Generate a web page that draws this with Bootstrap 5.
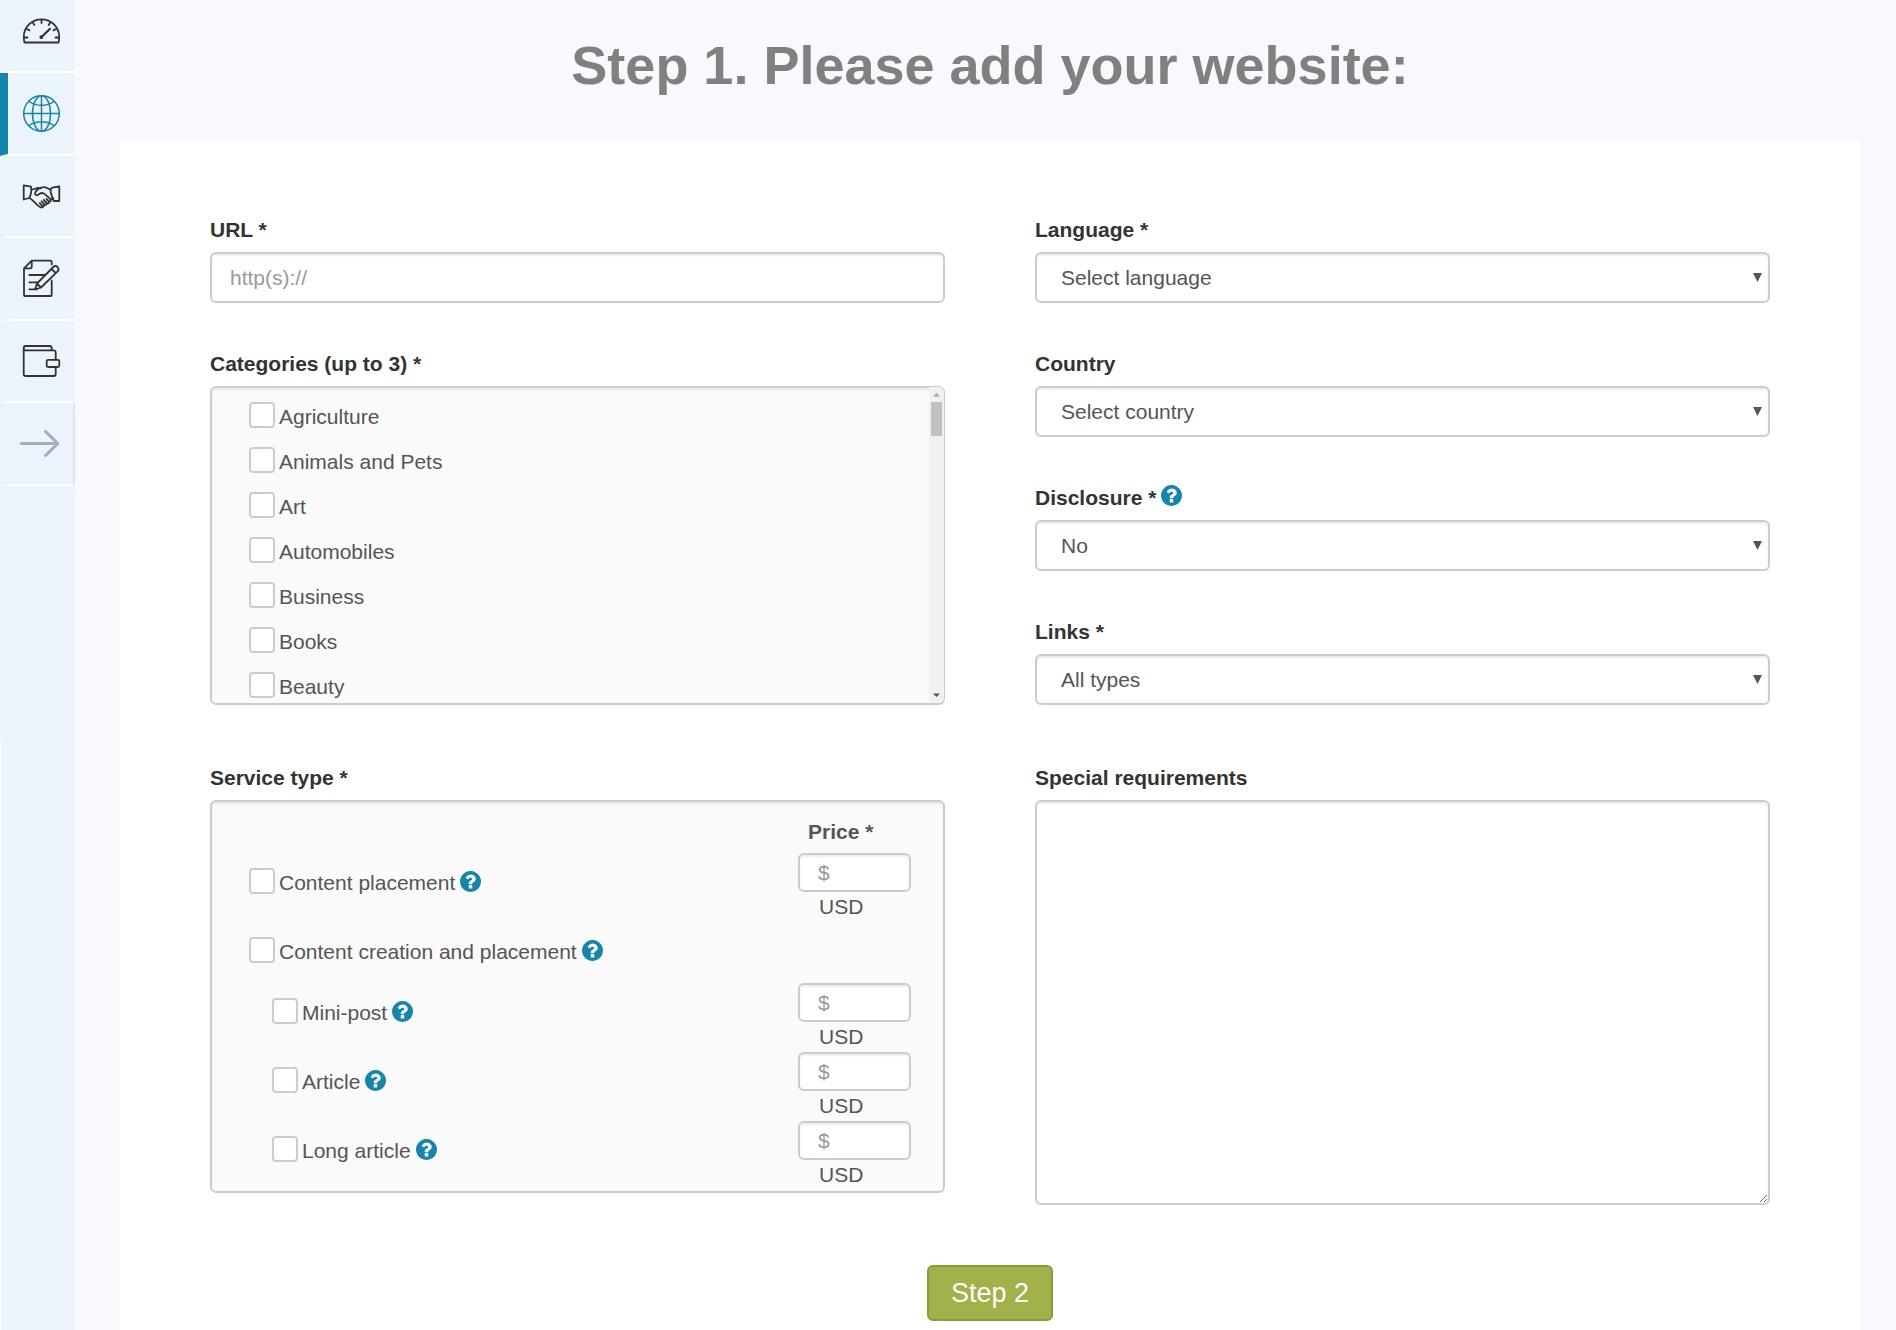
<!DOCTYPE html>
<html lang="en">
<head>
<meta charset="utf-8">
<meta name="viewport" content="width=device-width, initial-scale=1">
<title>Add your website</title>
<link href="https://cdn.jsdelivr.net/npm/bootstrap@5.3.0/dist/css/bootstrap.min.css" rel="stylesheet">
<style>
  body { font-family: "Liberation Sans", Arial, sans-serif; font-size: 21px; line-height: 30px; color: #555; background: #f8f9fe; }

  /* Side navigation */
  .rail { flex: 0 0 75px; background: linear-gradient(#fff, #fff) 0 740px / 1px 100% no-repeat #ebf3fb; }
  .rail-list { height: 486px; }
  .rail-link { flex: 1 1 0; padding-bottom: 22px; color: #333; border-left: 8px solid #ebf3fb; border-bottom: 2px solid #fff; }
  .rail-link:first-child { flex: 0 0 73px; }
  .rail-link.active { color: #1485ad; border-left-color: #1485ad; }
  .rail-link.expand { color: #a3adbd; border-right: 2px solid #dfe4fd; }
  .rail-link svg { width: 37px; height: 37px; overflow: visible; fill: none; stroke: currentColor; stroke-width: 1.8; stroke-linecap: round; stroke-linejoin: round; }
  .rail-link.active svg { stroke-width: 1.5; }
  .rail-link.expand svg { stroke-width: 3; margin-left: 2px; }

  /* Page */
  .content { padding: 0 36px 0 45px; }
  .page-title { padding: 35px 0 45px; font-size: 54px; line-height: 60px; font-weight: 700; color: #808080; }
  .panel { padding: 75px 90px 9px; background: #fff; }
  .panel .row { --bs-gutter-x: 90px; }
  .stack { gap: 46px; }
  .second-row { margin-top: 58px; }

  /* Fields */
  .field-label { display: flex; gap: 5px; margin-bottom: 7px; font-weight: 700; color: #333; }
  .field, .box { border: 2px solid #ccc; border-radius: 6px; box-shadow: inset 0 2px 2px rgba(0,0,0,.075); }
  .field { display: block; width: 100%; height: 51px; padding: 0 18px; font-size: 21px; line-height: 30px; color: #555; background-color: #fff; }
  .field::placeholder { color: #999; opacity: 1; }
  select.field { appearance: none; padding-left: 24px; background: url("data:image/svg+xml,%3Csvg xmlns='http://www.w3.org/2000/svg' viewBox='0 0 9 9'%3E%3Cpath fill='%23555' d='M0 0h9L4.500 9z'/%3E%3C/svg%3E") right 6px top 19px / 9px 9px no-repeat #fff; }
  textarea.field { height: 405px; padding: 9px 18px; resize: both; }
  .field.price { width: 113px; height: 39px; }
  .box { background: #fafafa; }
  .tick { display: flex; gap: 4px; }
  .tick input { appearance: none; flex: none; width: 26px; height: 26px; margin: 0; border: 2px solid #ccc; border-radius: 4px; background: #fff; }
  .tick input:checked { background: #1485ad; }
  .help { display: block; flex: none; width: 21px; height: 21px; margin-top: 2px; padding: 0; border: 0; background: none; color: #1485ad; }
  .service .help { margin-top: 3px; }
  .help svg { display: block; width: 21px; height: 21px; fill: currentColor; }

  /* Categories */
  .categories { height: 319px; }
  .category-list { padding: 14px 37px 0; gap: 15px; overflow-y: auto; scrollbar-width: none; }
  .category-list::-webkit-scrollbar { display: none; }
  .scroll-track { flex: 0 0 15px; margin: -1px -1px 0 0; padding: 5px 2px; background: #f1f1f1; border-radius: 0 5px 5px 0; }
  .scroll-thumb { width: 11px; height: 34px; margin: 5px 0 auto; background: #c1c1c1; }
  .scroll-track svg { display: block; width: 7px; height: 5px; }

  /* Services */
  .services { padding: 15px 32px 1px 37px; }
  .price-head { width: 103px; margin-bottom: 6px; }
  .service { padding-top: 15px; gap: 5px; }
  .service.alone { padding-bottom: 16px; }
  .service.child { padding-left: 23px; }
  .unit { padding-left: 21px; }

  .btn-next { --bs-btn-color: #fff; --bs-btn-bg: #a3b14a; --bs-btn-border-color: #8b9b35; --bs-btn-hover-color: #fff; --bs-btn-hover-bg: #93a23e; --bs-btn-hover-border-color: #7b8a2c; --bs-btn-padding-x: 22px; --bs-btn-padding-y: 8px; --bs-btn-font-size: 27px; --bs-btn-line-height: 36px; --bs-btn-border-width: 2px; --bs-btn-border-radius: 6px; margin-top: 60px; }
</style>
</head>
<body>
<svg class="d-none" aria-hidden="true">
  <symbol id="q" viewBox="128 128 1536 1536"><path d="M1024 1376v-192q0-14-9-23t-23-9h-192q-14 0-23 9t-9 23v192q0 14 9 23t23 9h192q14 0 23-9t9-23zm256-672q0-88-55.500-163t-138.500-116-170-41q-243 0-371 213-15 24 8 42l132 100q7 6 19 6 16 0 25-12 53-68 86-92 34-24 86-24 48 0 85.500 26t37.500 59q0 38-20 61t-68 45q-63 28-115.500 86.500t-52.500 125.500v36q0 14 9 23t23 9h192q14 0 23-9t9-23q0-19 21.500-49.500t54.500-49.500q32-18 49-28.500t46-35 44.500-48 28-60.500 12.500-81zm384 192q0 209-103 385.500t-279.500 279.500-385.500 103-385.500-103-279.500-279.500-103-385.500 103-385.500 279.500-279.500 385.500-103 385.500 103 279.500 279.500 103 385.500z"/></symbol>
</svg>
<div class="d-flex min-vh-100">
  <aside class="rail">
    <nav class="rail-list d-flex flex-column" aria-label="Main">
      <a class="rail-link d-flex align-items-end justify-content-center" href="#" aria-label="Dashboard">
        <svg viewBox="0 0 37 37"><path d="M1.500 30.500h34q.7-2.700.7-5.500a17.700 17.700 0 0 0-35.400 0q0 2.800.7 5.500zM1 25.500h3.500M36 25.500h-3.500M3.500 16.800l3 1.600M33.500 16.800l-3 1.600M9.500 10l1.800 3M27.500 10l-1.800 3M18.500 7.500v3.500"/><path d="M18.300 25.200l8.500-8.200" stroke-width="2.200"/><circle cx="18.300" cy="25.200" r="1" fill="currentColor"/></svg>
      </a>
      <a class="rail-link active d-flex align-items-end justify-content-center" href="#" aria-label="Websites" aria-current="page">
        <svg viewBox="0 0 37 37"><circle cx="18.500" cy="18.500" r="17.800"/><ellipse cx="18.500" cy="18.500" rx="9" ry="17.800"/><path d="M18.500.7v35.600M.7 18.500h35.600M6 6.500q5.500 3.800 12.500 3.800t12.500-3.800M6 30.500q5.500-3.800 12.500-3.800t12.500 3.800"/></svg>
      </a>
      <a class="rail-link d-flex align-items-end justify-content-center" href="#" aria-label="Deals">
        <svg viewBox="0 0 37 37"><path d="M.7 8.300L8 9.700q1 6-1.700 11.300l-5.600 1.500zM36.300 9.500l-6 .8q-3.600.7-2.500 5.200.8 4.500 3 8.500h5.500zM8.500 12.300c3 .6 4-1.600 7.200-1.300l2.300.3M6.500 21c3 1.500 5.300 5.200 9.500 8.400 1.700 1.300 3.600 1.200 4.600.1M28 12.200c-3 .6-4-2.400-7.800-2-3.700.2-7.500 3.300-8.200 6.300-.3 1.500 1.700 2 3.200 1.200 1.600-.9 2.800-2.200 4.800-1.600 2.500.8 5 4.300 7.500 6.200 1.200 1.300 0 2.700-1.500 2.200L23.500 22M26 24.500c.5 1.800-.9 2.500-2.300 1.500l-3-3M23.700 26c.3 1.700-1 2.300-2.200 1.300L18.500 24.300M21.300 27.500c.2 2-1.300 2-2.300 1l-2.300-2.300M28 22.500l2.300-1.200"/></svg>
      </a>
      <a class="rail-link d-flex align-items-end justify-content-center" href="#" aria-label="Articles">
        <svg viewBox="0 0 37 37"><path d="M28.700 4.500V1.700q0-1-1-1H8.700L1 8.300v26.700q0 1 1 1h25.700q1 0 1-1V20.500M8.700.7v6.600q0 1-1 1H1M6.300 15H22M6.300 22.300h8M6.300 29.300H14M12 29.300l2-5.800L30.300 7q2.200-2 4.300 0 2 2.200 0 4.400L18 27.500zM14 23.500l4 4M28.500 8.800l4.200 4.200"/></svg>
      </a>
      <a class="rail-link d-flex align-items-end justify-content-center" href="#" aria-label="Wallet">
        <svg viewBox="0 0 37 37"><path d="M32.700 17.700V10.300q0-2-2-2H2.500Q.7 8.300.7 6.500V32q0 2 2 2h28q2 0 2-2v-6.500M.7 6.500Q.7 4 2.700 4h24q2 0 2 2v2.300"/><rect x="23.700" y="17.800" width="12.600" height="7.200" rx="1.500"/></svg>
      </a>
      <a class="rail-link expand d-flex align-items-end justify-content-center" href="#" aria-label="Expand menu">
        <svg viewBox="0 0 37 37"><path d="M-1.500 18.500h36M22.500 6.500l12.300 12-12.300 12"/></svg>
      </a>
    </nav>
  </aside>

  <main class="content flex-grow-1 d-flex flex-column">
    <h1 class="page-title text-center m-0">Step 1. Please add your website:</h1>
    <form class="panel flex-grow-1">
      <div class="row">
        <div class="col-lg-6 d-flex flex-column stack">
          <div>
            <label class="field-label" for="url">URL *</label>
            <input class="field" id="url" type="text" placeholder="http(s)://">
          </div>
          <div role="group" aria-labelledby="cat-label">
            <div class="field-label" id="cat-label">Categories (up to 3) *</div>
            <div class="box categories d-flex">
              <div class="category-list flex-grow-1 d-flex flex-column">
                <label class="tick"><input type="checkbox">Agriculture</label>
                <label class="tick"><input type="checkbox">Animals and Pets</label>
                <label class="tick"><input type="checkbox">Art</label>
                <label class="tick"><input type="checkbox">Automobiles</label>
                <label class="tick"><input type="checkbox">Business</label>
                <label class="tick"><input type="checkbox">Books</label>
                <label class="tick"><input type="checkbox">Beauty</label>
              </div>
              <div class="scroll-track d-flex flex-column align-items-center" aria-hidden="true">
                <svg viewBox="0 0 7 5"><path fill="#a3a3a3" d="M0 4.500h7L3.500 1z"/></svg>
                <div class="scroll-thumb"></div>
                <svg viewBox="0 0 7 5"><path fill="#505050" d="M0 .5h7L3.500 4z"/></svg>
              </div>
            </div>
          </div>
        </div>
        <div class="col-lg-6 d-flex flex-column stack">
          <div>
            <label class="field-label" for="language">Language *</label>
            <select class="field" id="language"><option>Select language</option></select>
          </div>
          <div>
            <label class="field-label" for="country">Country</label>
            <select class="field" id="country"><option>Select country</option></select>
          </div>
          <div>
            <div class="field-label"><label for="disclosure">Disclosure *</label><button class="help" type="button" aria-label="Help"><svg><use href="#q"/></svg></button></div>
            <select class="field" id="disclosure"><option>No</option></select>
          </div>
          <div>
            <label class="field-label" for="links">Links *</label>
            <select class="field" id="links"><option>All types</option></select>
          </div>
        </div>
      </div>

      <div class="row second-row">
        <div class="col-lg-6" role="group" aria-labelledby="service-label">
          <div class="field-label" id="service-label">Service type *</div>
          <div class="box services">
            <div class="price-head ms-auto fw-bold">Price *</div>
            <div class="d-flex justify-content-between">
              <div class="service d-flex align-items-start"><label class="tick"><input type="checkbox">Content placement</label><button class="help" type="button" aria-label="Help"><svg><use href="#q"/></svg></button></div>
              <div><input class="field price" id="p1" type="text" placeholder="$" aria-label="Content placement price"><label class="unit d-block" for="p1">USD</label></div>
            </div>
            <div class="service alone d-flex align-items-start"><label class="tick"><input type="checkbox">Content creation and placement</label><button class="help" type="button" aria-label="Help"><svg><use href="#q"/></svg></button></div>
            <div class="d-flex justify-content-between">
              <div class="service child d-flex align-items-start"><label class="tick"><input type="checkbox">Mini-post</label><button class="help" type="button" aria-label="Help"><svg><use href="#q"/></svg></button></div>
              <div><input class="field price" id="p2" type="text" placeholder="$" aria-label="Mini-post price"><label class="unit d-block" for="p2">USD</label></div>
            </div>
            <div class="d-flex justify-content-between">
              <div class="service child d-flex align-items-start"><label class="tick"><input type="checkbox">Article</label><button class="help" type="button" aria-label="Help"><svg><use href="#q"/></svg></button></div>
              <div><input class="field price" id="p3" type="text" placeholder="$" aria-label="Article price"><label class="unit d-block" for="p3">USD</label></div>
            </div>
            <div class="d-flex justify-content-between">
              <div class="service child d-flex align-items-start"><label class="tick"><input type="checkbox">Long article</label><button class="help" type="button" aria-label="Help"><svg><use href="#q"/></svg></button></div>
              <div><input class="field price" id="p4" type="text" placeholder="$" aria-label="Long article price"><label class="unit d-block" for="p4">USD</label></div>
            </div>
          </div>
        </div>
        <div class="col-lg-6">
          <label class="field-label" for="requirements">Special requirements</label>
          <textarea class="field" id="requirements"></textarea>
        </div>
      </div>
      <div class="text-center">
        <button class="btn btn-next" type="submit">Step 2</button>
      </div>
    </form>
  </main>
</div>
<script src="https://cdn.jsdelivr.net/npm/bootstrap@5.3.0/dist/js/bootstrap.bundle.min.js"></script>
</body>
</html>
